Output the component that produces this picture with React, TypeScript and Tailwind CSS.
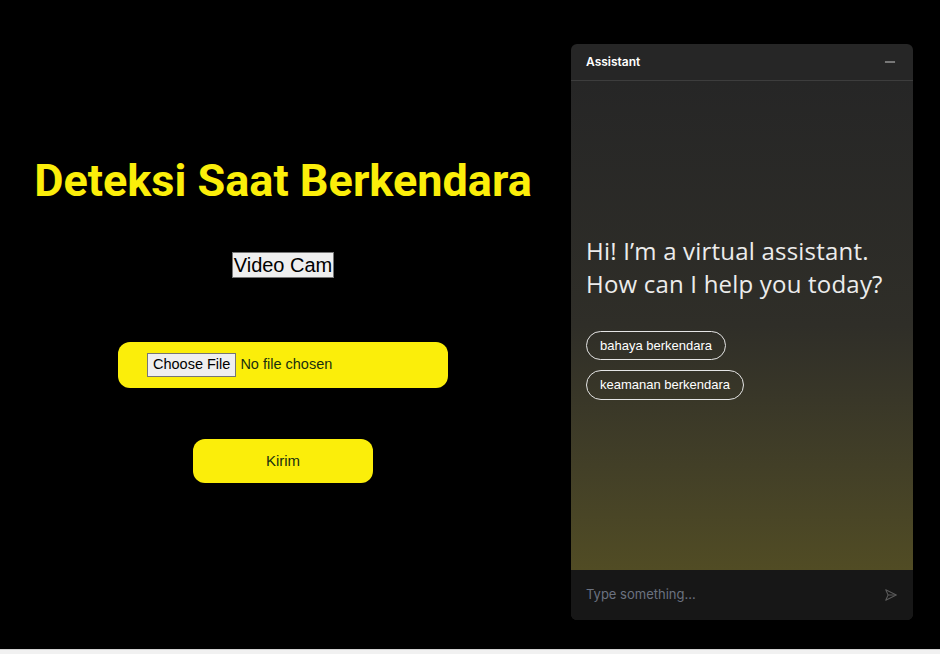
import { Minus } from "lucide-react";

function ChatPanel() {
  return (
    <div className="flex h-[576px] w-[342px] flex-col overflow-hidden rounded-md bg-[#262626] font-['Inter',sans-serif]">
      <div className="flex h-[37px] shrink-0 items-center justify-between border-b border-[#3d3d3d] px-[15px]">
        <span className="text-[12px] font-semibold text-white">Assistant</span>
        <Minus className="h-4 w-4 text-[#c8c8c8]" strokeWidth={1.5} />
      </div>

      <div className="flex flex-1 flex-col justify-center bg-gradient-to-b from-[#262626] via-[#2f2e28] to-[#514c24] px-[15px] pb-[18px]">
        <p className="font-['Open_Sans',sans-serif] text-[24px] leading-[33px] tracking-[0.2px] text-[#ececec]">
          Hi! I’m a virtual assistant.
          <br />
          How can I help you today?
        </p>
        <div className="mt-[31px] flex flex-col items-start gap-[10px]">
          <button className="rounded-full border border-[#e5e5e5] px-[13px] py-[4px] font-['Liberation_Sans',sans-serif] text-[13px] text-white">
            bahaya berkendara
          </button>
          <button className="rounded-full border border-[#e5e5e5] px-[13px] py-[4px] font-['Liberation_Sans',sans-serif] text-[13px] text-white">
            keamanan berkendara
          </button>
        </div>
      </div>

      <div className="flex h-[50px] shrink-0 items-center justify-between bg-[#171717] px-[15px]">
        <span className="text-[13px] text-[#6b7280]">Type something...</span>
        <svg
          width="14"
          height="14"
          viewBox="0 0 24 24"
          fill="none"
          stroke="#5a5a5a"
          strokeWidth="1.8"
          strokeLinejoin="round"
        >
          <path d="M3 3l18 9-18 9 4-9-4-9z" />
          <path d="M7 12h14" />
        </svg>
      </div>
    </div>
  );
}

export default function App() {
  return (
    <div className="flex h-[654px] w-[940px] flex-col overflow-hidden bg-black">
      <div className="flex flex-1">
        <div className="flex w-[566px] flex-col items-center pt-[153px] font-['Liberation_Sans',sans-serif]">
          <h1 className="font-['Roboto',sans-serif] text-[45px] font-bold leading-[56px] text-[#fbee0a]">
            Deteksi Saat Berkendara
          </h1>
          <button className="mt-[43px] border border-[#767676] bg-[#efefef] px-[1px] text-[20px] leading-[24px] text-black">
            Video Cam
          </button>
          <div className="mt-[64px] flex h-[46px] w-[330px] items-center rounded-xl bg-[#fbee0a] pl-[29px]">
            <input
              type="file"
              className="text-[14.5px] text-[#183010] file:mr-[4px] file:border file:border-[#767676] file:bg-[#efefef] file:px-[5px] file:text-[14.5px] file:text-black"
            />
          </div>
          <button className="mt-[51px] h-[44px] w-[180px] rounded-xl bg-[#fbee0a] text-[15px] text-[#183010]">
            Kirim
          </button>
        </div>
        <div className="pl-[5px] pt-[44px]">
          <ChatPanel />
        </div>
      </div>
      <div className="h-[5px] shrink-0 border-t border-[#d4d4d4] bg-[#f1f1f1]" />
    </div>
  );
}
